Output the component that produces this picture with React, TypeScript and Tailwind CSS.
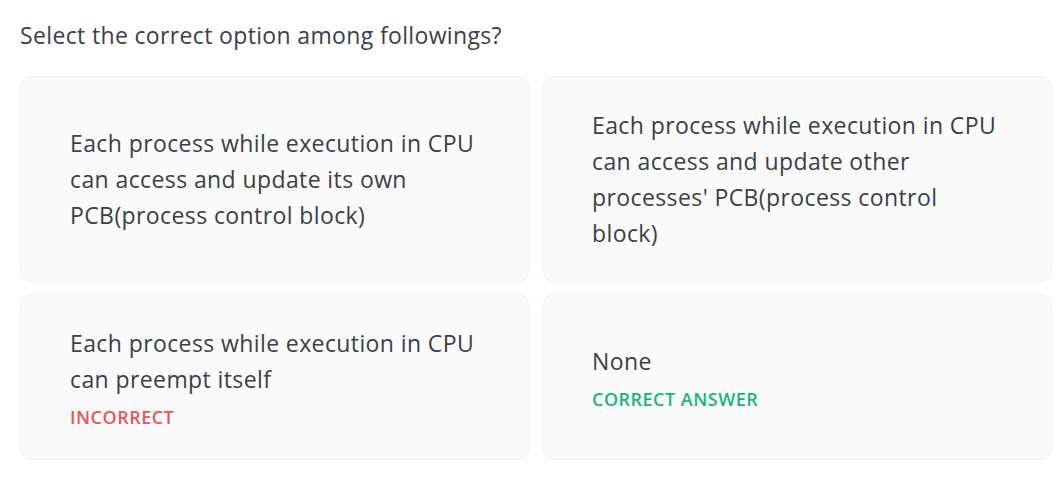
const options = [
  {
    text: 'Each process while execution in CPU can access and update its own PCB(process control block)',
  },
  {
    text: "Each process while execution in CPU can access and update other processes' PCB(process control block)",
  },
  {
    text: 'Each process while execution in CPU can preempt itself',
    status: 'incorrect',
  },
  {
    text: 'None',
    status: 'correct',
  },
];

function OptionCard({ text, status }: { text: string; status?: string }) {
  return (
    <div className="flex flex-col justify-center rounded-xl border border-[#f0f0f0] bg-[#fafafa] py-[30px] pl-[49px] pr-[52px]">
      <p className="text-[23px] leading-9 tracking-[0.4px] text-[#3c4047]">{text}</p>
      {status === 'incorrect' && (
        <span className="mt-2 text-[18px] font-semibold leading-6 tracking-[0.5px] text-[#eb5757]">INCORRECT</span>
      )}
      {status === 'correct' && (
        <span className="mt-2 text-[18px] font-semibold leading-6 tracking-[0.5px] text-[#17b67f]">CORRECT ANSWER</span>
      )}
    </div>
  );
}

export default function App() {
  return (
    <div className="min-h-screen bg-white pl-5 pr-2 pt-[21px] font-['Open_Sans',sans-serif]">
      <h1 className="text-[23px] leading-7 tracking-[0.35px] text-[#3c4047]">Select the correct option among followings?</h1>
      <div className="mt-[27px] grid grid-cols-2 gap-[12px]">
        {options.map((o) => (
          <OptionCard key={o.text} text={o.text} status={o.status} />
        ))}
      </div>
    </div>
  );
}
